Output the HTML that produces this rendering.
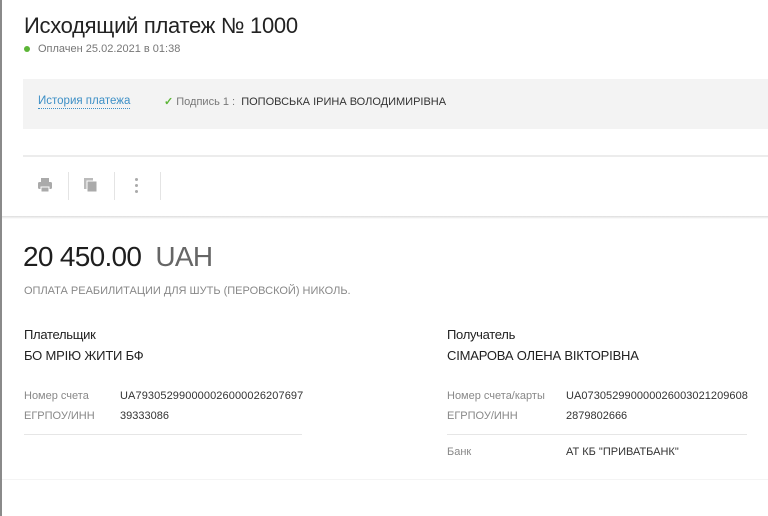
<!DOCTYPE html>
<html><head><meta charset="utf-8"><style>
*{margin:0;padding:0;box-sizing:border-box}
body{width:768px;height:516px;background:#fff;font-family:"Liberation Sans",sans-serif;position:relative;overflow:hidden;color:#222}
.a{position:absolute;white-space:nowrap;letter-spacing:0}
.lb{position:absolute;left:0;top:0;width:2px;height:516px;background:#8a8a8a}
</style></head><body>
<div class="lb"></div>
<div class="a" style="left:24px;top:13px;font-size:22px;color:#222;letter-spacing:-0.3px">Исходящий платеж № 1000</div>
<div style="position:absolute;left:24px;top:46px;width:6px;height:6px;border-radius:50%;background:#5cb537"></div>
<div class="a" style="left:38px;top:43px;font-size:11px;color:#777">Оплачен 25.02.2021 в 01:38</div>
<div style="position:absolute;left:23px;top:79px;right:0;height:50px;background:#f3f3f3"></div>
<div class="a" style="left:38px;top:94px;font-size:11.5px;color:#3c8fc6;border-bottom:1px dotted #3c8fc6;line-height:14px">История платежа</div>
<div class="a" style="left:164px;top:95px;font-size:11px;color:#777"><span style="color:#5cb537;font-weight:bold">✓</span> Подпись 1 : &nbsp;<span style="color:#333">ПОПОВСЬКА ІРИНА ВОЛОДИМИРІВНА</span></div>
<div style="position:absolute;left:23px;top:155px;right:0;height:2px;background:#ececec"></div>
<svg style="position:absolute;left:37px;top:177px" width="16" height="16" viewBox="0 0 16 16"><rect x="4" y="1" width="8" height="4" fill="#aaa"/><rect x="1" y="5" width="14" height="7" rx="1.5" fill="#aaa"/><rect x="4" y="10" width="8" height="5" fill="#aaa" stroke="#fff" stroke-width="1"/></svg>
<div style="position:absolute;left:68px;top:172px;width:1px;height:28px;background:#e4e4e4"></div>
<svg style="position:absolute;left:83px;top:177px" width="16" height="16" viewBox="0 0 16 16"><rect x="1" y="1" width="9" height="11" fill="#bbb"/><rect x="4" y="4" width="10" height="11" fill="#aaa" stroke="#fff" stroke-width="1"/></svg>
<div style="position:absolute;left:114px;top:172px;width:1px;height:28px;background:#e4e4e4"></div>
<div style="position:absolute;left:135px;top:178px;width:3px;height:3px;border-radius:50%;background:#aaa"></div>
<div style="position:absolute;left:135px;top:184px;width:3px;height:3px;border-radius:50%;background:#aaa"></div>
<div style="position:absolute;left:135px;top:190px;width:3px;height:3px;border-radius:50%;background:#aaa"></div>
<div style="position:absolute;left:160px;top:172px;width:1px;height:28px;background:#e4e4e4"></div>
<div style="position:absolute;left:2px;top:216px;right:0;height:3px;background:linear-gradient(#ddd,#fff)"></div>
<div class="a" style="left:23px;top:241px;font-size:28px;color:#1e1e1e;letter-spacing:-0.7px">20 450.00 <span style="color:#666;margin-left:7px">UAH</span></div>
<div class="a" style="left:24px;top:285px;font-size:11px;color:#888;letter-spacing:0px">ОПЛАТА РЕАБИЛИТАЦИИ ДЛЯ ШУТЬ (ПЕРОВСКОЙ) НИКОЛЬ.</div>
<div class="a" style="left:24px;top:327px;font-size:13px;color:#222;letter-spacing:-0.3px">Плательщик</div>
<div class="a" style="left:24px;top:348px;font-size:13px;color:#222;letter-spacing:-0.2px">БО МРІЮ ЖИТИ БФ</div>
<div class="a" style="left:24px;top:390px;font-size:11px;color:#888">Номер счета</div>
<div class="a" style="left:120px;top:390px;font-size:11px;color:#333;letter-spacing:0.1px">UA793052990000026000026207697</div>
<div class="a" style="left:24px;top:410px;font-size:11px;color:#888">ЕГРПОУ/ИНН</div>
<div class="a" style="left:120px;top:410px;font-size:11px;color:#333">39333086</div>
<div style="position:absolute;left:24px;top:434px;width:278px;height:1px;background:#e6e6e6"></div>
<div class="a" style="left:447px;top:327px;font-size:13px;color:#222;letter-spacing:-0.3px">Получатель</div>
<div class="a" style="left:447px;top:348px;font-size:13px;color:#222;letter-spacing:-0.2px">СІМАРОВА ОЛЕНА ВІКТОРІВНА</div>
<div class="a" style="left:447px;top:390px;font-size:11px;color:#888">Номер счета/карты</div>
<div class="a" style="left:566px;top:390px;font-size:11px;color:#333;letter-spacing:0.05px">UA073052990000026003021209608</div>
<div class="a" style="left:447px;top:410px;font-size:11px;color:#888">ЕГРПОУ/ИНН</div>
<div class="a" style="left:566px;top:410px;font-size:11px;color:#333">2879802666</div>
<div style="position:absolute;left:447px;top:434px;width:300px;height:1px;background:#e6e6e6"></div>
<div class="a" style="left:447px;top:446px;font-size:11px;color:#888">Банк</div>
<div class="a" style="left:566px;top:446px;font-size:11px;color:#333">АТ КБ "ПРИВАТБАНК"</div>
<div style="position:absolute;left:2px;top:479px;right:0;height:1px;background:#f4f4f4"></div>
</body></html>
